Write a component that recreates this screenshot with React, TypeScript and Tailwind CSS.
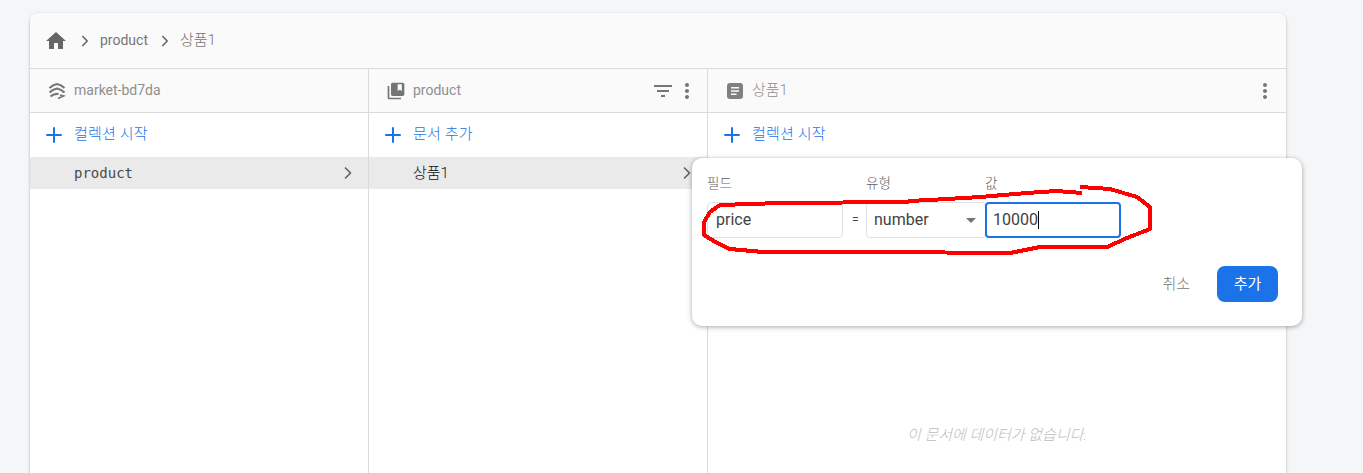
import { ChevronRight, Plus } from "lucide-react";

const FONT = "font-['Roboto','Noto_Sans_CJK_KR',sans-serif]";
const KO = "text-[15px] font-light";

function Dots() {
  return (
    <svg width="24" height="24" viewBox="0 0 24 24" fill="#757575">
      <path d="M12 8c1.1 0 2-.9 2-2s-.9-2-2-2-2 .9-2 2 .9 2 2 2zm0 2c-1.1 0-2 .9-2 2s.9 2 2 2 2-.9 2-2-.9-2-2-2zm0 6c-1.1 0-2 .9-2 2s.9 2 2 2 2-.9 2-2-.9-2-2-2z" />
    </svg>
  );
}

function HomeIcon() {
  return (
    <svg width="24" height="24" viewBox="0 0 24 24" fill="#666666">
      <path d="M10 20v-6h4v6h5v-8h3L12 3 2 12h3v8z" />
    </svg>
  );
}

function DatabaseIcon() {
  return (
    <svg width="18" height="18" viewBox="0 0 18 18" fill="none" stroke="#757575" strokeWidth="2.2" className="ml-[1px]">
      <path d="M1.5 6 C4 3.6 6.5 2.4 9 2 C11.5 2.4 14 3.6 16.5 6" />
      <path d="M1.5 10.5 C4 8.1 6.5 6.9 9 6.5 C11.5 6.9 14 8.1 16.5 10.5" />
      <path d="M2.5 14.5 C4.5 12.8 7 11.6 10.5 12" />
      <path d="M12 13 L15.5 14 L10 16.5" strokeWidth="1.7" />
    </svg>
  );
}

function CollectionIcon() {
  return (
    <svg width="20" height="20" viewBox="0 0 24 24" fill="#757575">
      <path d="M4 6H2v14c0 1.1.9 2 2 2h14v-2H4V6zm16-4H8c-1.1 0-2 .9-2 2v12c0 1.1.9 2 2 2h12c1.1 0 2-.9 2-2V4c0-1.1-.9-2-2-2zm-1 10-2.5-1.5L14 12V4h5v8z" />
    </svg>
  );
}

function DocIcon() {
  return (
    <svg width="18" height="18" viewBox="0 0 18 18" fill="#808080" className="ml-[1px]">
      <path
        fillRule="evenodd"
        d="M4 1h10a3 3 0 0 1 3 3v10a3 3 0 0 1-3 3H4a3 3 0 0 1-3-3V4a3 3 0 0 1 3-3zM5 5v1.5h8V5H5zm0 3.2v1.5h8V8.2H5zm0 3.2v1.5h5.5v-1.5H5z"
      />
    </svg>
  );
}

function FilterIcon() {
  return (
    <svg width="24" height="24" viewBox="0 0 24 24" fill="#757575">
      <path d="M10 18h4v-2h-4v2zM3 6v2h18V6H3zm3 7h12v-2H6v2z" />
    </svg>
  );
}

function ColumnHeader({ icon, title, actions, ko }: { icon: React.ReactNode; title: string; actions?: React.ReactNode; ko?: boolean }) {
  return (
    <div className="flex h-[44px] items-center border-b border-[#dadada] bg-[#fafafa] pl-[17px] pr-[9px]">
      <span className="flex w-[27px] shrink-0 items-center">{icon}</span>
      <span className={`${ko ? KO : "text-[14px]"} text-[#8f8f8f]`}>{title}</span>
      <span className="ml-auto flex items-center">{actions}</span>
    </div>
  );
}

function AddRow({ label }: { label: string }) {
  return (
    <div className="flex h-[44px] items-center gap-[8px] pl-[12px] text-[#1a73e8]">
      <Plus size={24} strokeWidth={2} color="#1a73e8" />
      <span className={`-mt-[2px] tracking-[0.2px] ${KO}`}>{label}</span>
    </div>
  );
}

function SelectedRow({ label, mono }: { label: string; mono?: boolean }) {
  return (
    <div className="flex h-[32px] items-center bg-[#eaeaea] pl-[44px] pr-[10px]">
      <span className={mono ? "font-['DejaVu_Sans_Mono',monospace] text-[14px] text-[#4a4a4a]" : `${KO} text-[#111]`}>
        {label}
      </span>
      <ChevronRight size={20} color="#616161" className="ml-auto" />
    </div>
  );
}

function Scribble() {
  return (
    <svg
      className="absolute left-0 top-0"
      width="1363"
      height="473"
      fill="none"
      stroke="#ff0000"
      strokeWidth="4"
      strokeLinejoin="round"
      shapeRendering="crispEdges"
    >
      <path d="M1080 187 L1110 189 L1137 197 L1150 207 L1150 229 L1127 238 L1107 247 L1040 247 L1010 253 L880 252 L813 252 L763 252 L730 249 L717 243 L704 235 L704 222 L710 212 L720 205 L780 203 L907 202 L910 201 L947 199 L980 197 L1027 193 L1057 191 L1082 193" />
    </svg>
  );
}

function AddFieldPopup() {
  return (
    <div className="absolute left-[692px] top-[158px] h-[168px] w-[610px] rounded-[10px] bg-white pl-[15px] pr-[24px] pt-[17px] shadow-[0_1px_5px_rgba(0,0,0,0.35)]">
      <div className="flex h-[16px] text-[13.5px] font-light leading-[16px] text-[#616161]">
        <span className="w-[159px]">필드</span>
        <span className="w-[119px]">유형</span>
        <span>값</span>
      </div>
      <div className="mt-[11px] flex items-center text-[16px] text-[#424242]">
        <div className="flex h-[36px] w-[136px] items-center rounded-[4px] border border-[#e0e0e0] pl-[8px]">price</div>
        <div className="w-[23px] pl-[9px] text-[12px]">=</div>
        <div className="flex h-[36px] w-[120px] items-center rounded-[4px] border border-[#e0e0e0] pl-[7px]">
          number
          <span className="ml-auto mr-[9px] h-0 w-0 border-x-[5px] border-t-[5px] border-x-transparent border-t-[#757575]" />
        </div>
        <div className="-ml-[1px] flex h-[36px] w-[136px] items-center rounded-[4px] border-2 border-[#1a73e8] pl-[6px]">
          10000<span className="h-[18px] w-px bg-black" />
        </div>
      </div>
      <div className="mt-[28px] flex items-center justify-end">
        <span className={`mr-[27px] ${KO} text-[#757575]`}>취소</span>
        <button className="h-[36px] w-[61px] rounded-[8px] bg-[#1a73e8] text-[15px] text-white">추가</button>
      </div>
    </div>
  );
}

export default function App() {
  return (
    <div className={`relative h-[473px] w-[1363px] overflow-hidden bg-[#f5f6f8] pl-[30px] pt-[13px] ${FONT}`}>
      <div className="h-[500px] w-[1256px] rounded-t-[8px] bg-white shadow-[0_1px_3px_rgba(0,0,0,0.3)]">
        <div className="flex h-[56px] items-center rounded-t-[8px] border-b border-[#dadada] bg-[#fafafa] pl-[14px] text-[14px] text-[#757575]">
          <HomeIcon />
          <ChevronRight size={18} color="#616161" className="ml-[8px] mr-[6px]" />
          <span>product</span>
          <ChevronRight size={18} color="#616161" className="ml-[8px] mr-[6px]" />
          <span className={KO}>상품1</span>
        </div>
        <div className="grid grid-cols-[339px_339px_1fr]">
          <div className="h-[444px] border-r border-[#dadada]">
            <ColumnHeader icon={<DatabaseIcon />} title="market-bd7da" />
            <AddRow label="컬렉션 시작" />
            <SelectedRow label="product" mono />
          </div>
          <div className="h-[444px] border-r border-[#dadada]">
            <ColumnHeader
              icon={<CollectionIcon />}
              title="product"
              actions={
                <span className="-mr-[1px] flex items-center">
                  <FilterIcon />
                  <Dots />
                </span>
              }
            />
            <AddRow label="문서 추가" />
            <SelectedRow label="상품1" />
          </div>
          <div className="flex h-[444px] flex-col">
            <ColumnHeader icon={<DocIcon />} title="상품1" ko actions={<Dots />} />
            <AddRow label="컬렉션 시작" />
            <p className="mt-[267px] text-center text-[15px] font-light italic text-[#bdbdbd]">이 문서에 데이터가 없습니다.</p>
          </div>
        </div>
      </div>
      <AddFieldPopup />
      <Scribble />
    </div>
  );
}
